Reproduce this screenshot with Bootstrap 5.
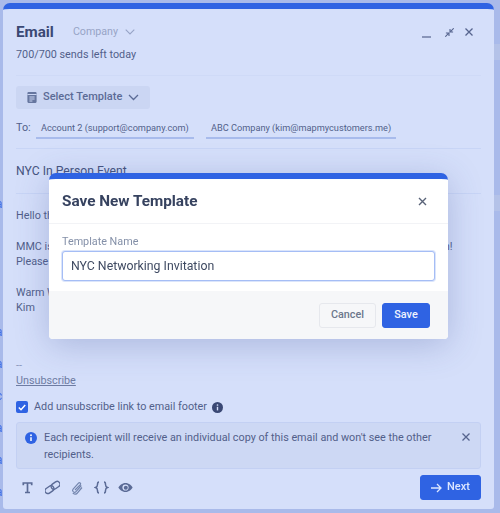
<!DOCTYPE html>
<html lang="en">
<head>
<meta charset="utf-8">
<title>Email</title>
<link href="https://cdn.jsdelivr.net/npm/bootstrap@5.3.0/dist/css/bootstrap.min.css" rel="stylesheet">
<style>
html,body{height:513px;overflow:hidden}
body{background:#a9baea;font-family:Roboto,"Liberation Sans",sans-serif;color:#525f8a;font-size:10.8px;position:relative}
.stage{height:513px;filter:blur(.3px)}
.edge-left{width:3px;overflow:hidden;padding-top:192px;flex:none}
.edge-left span{display:block;height:32px;line-height:24px;color:#3f6fe6;font-size:12px;margin-left:-4px}
.edge-right{flex:1;display:flex;flex-direction:column;padding-top:44px}
.edge-band{height:16px;background:#b4c2e8;margin-bottom:135px}
.compose{width:491px;height:506px;margin-top:3px;background:#d5dffa;border-top:6px solid #2f63e3;border-radius:7px 7px 3px 3px;padding:0 13px;display:flex;flex-direction:column;flex:none}
.compose>*{flex:none}
.compose-head{height:67px;padding-top:12px;border-bottom:1px solid #cfdaf7}
.ttl{font-size:15.2px;font-weight:700;color:#3a4874;line-height:22px}
.company{font-size:10.7px;color:#97a4c6;margin-left:19px}
.chev-co{margin-left:7px}
.sends{font-size:10.8px;margin-top:3px;line-height:18px;color:#525f8a}
.win-btns{margin-right:8px;color:#56648e}
.tpl-row{height:33px}
.tpl-btn{background:#cbd6f3;border:0;border-radius:3px;color:#5b6b96;font-size:11px;font-weight:500;height:23px;width:134px;margin-top:10px;padding:0 11px;gap:6px;white-space:nowrap}
.to-row{height:40px;border-bottom:1px solid #c8d5f6;padding-top:6px;align-items:flex-start}
.to-lbl{font-size:10.8px;width:20px;margin-top:5px;line-height:16px}
.chip{font-size:9.2px;line-height:15px;height:24px;padding:5px 0 0 5px;border-bottom:2px solid #a8bbec;color:#525f8a;margin-right:12px}
.chip-a{width:158px}
.chip-b{width:190px}
.subj{font-size:12.2px;height:45px;line-height:45px;border-bottom:1px solid #c8d5f6;color:#46547f}
.body-txt{height:163px;padding-top:14px;line-height:15.5px;font-size:10.8px}
.body-txt p{margin:0 0 15px}
.dash{height:16px;line-height:17px;color:#8b98bb}
.unsub{color:#6e7ca3;text-decoration:underline;line-height:16px;display:block;font-size:10.8px}
.chk-row{margin-top:8px;height:20px;font-size:10.8px}
.chk-box{width:12px;height:12px;border-radius:2px;background:#2f63e3;flex:none}
.chk-txt{margin-left:6px;margin-right:5px}
.note{margin-top:5px;height:47px;background:#cdd8f4;border:1px solid #c3d0f3;border-radius:3px;padding:6px 9px 6px 8px;margin-bottom:0;gap:7px;line-height:17px;color:#525f8a;font-size:10.8px}
.note-txt{width:395px}
.note-ico{margin-top:3px;flex:none}
.note-x{margin:4px 1px 0 auto;flex:none}
.foot-row{height:40px;padding:6px 0 0 4px}
.tools{gap:9.5px;margin-top:5px}
.next-btn{--bs-btn-bg:#2f63e3;--bs-btn-border-color:#2f63e3;--bs-btn-color:#dce6ff;width:61px;height:25px;font-size:11px;font-weight:500;padding:0;border-radius:3px;gap:5px}
.save-pop{position:absolute;left:49px;top:173px;width:399px;height:166px;background:#fff;border:0;border-top:6px solid #2f63e3;border-radius:7px 7px 4px 4px;box-shadow:0 6px 34px rgba(60,80,150,.28);overflow:hidden;filter:blur(.3px)}
.pop-head{height:45px;flex:none;padding:0 13px;border-bottom:1px solid #f2f3f6;border-radius:0}
.pop-title{font-size:15.3px;font-weight:700;color:#36425f;line-height:20px}
.pop-close{margin-right:8px}
.pop-body{height:67px;padding:9px 13px 0;flex:none}
.pop-lbl{font-size:10.8px;color:#8490a8;margin:0;line-height:18px;display:block}
.pop-input{height:30px;border:1px solid #a5bdf5;border-radius:3px;box-shadow:0 0 0 1px #dbe5fb;font-size:12.3px;color:#3f4a62;padding:0 8px;font-family:Roboto,"Liberation Sans",sans-serif}
.pop-foot{height:48px;background:#f6f7f9;border:0;border-radius:0;padding:0 18px 0 0;margin:0;gap:6px}
.pop-foot>*{margin:0}
.cancel-btn{--bs-btn-color:#6c778c;--bs-btn-border-color:#e6e8ed;--bs-btn-bg:#f6f7f9;width:57px;height:25px;font-size:10.8px;font-weight:500;padding:0;border-radius:3px}
.save-btn{--bs-btn-bg:#2f63e3;--bs-btn-border-color:#2f63e3;--bs-btn-color:#f0f4ff;width:48px;height:25px;font-size:10.8px;font-weight:500;padding:0;border-radius:3px}
.i-min{margin:10px 14px 0 0}
.i-shr{margin:0 11px 0 0}
</style>
</head>
<body>
<div class="stage d-flex">
  <div class="edge-left"><span>a</span><span>)</span><span>)</span><span>l</span><span>a</span><span>a</span><span>c</span><span>a</span><span>a</span><span>a</span></div>
  <div class="compose">
    <div class="compose-head">
      <div class="d-flex justify-content-between">
        <div class="d-flex align-items-center">
          <span class="ttl">Email</span>
          <span class="company">Company</span>
          <svg class="chev-co" width="10" height="6" viewBox="0 0 10 6" fill="none" stroke="#97a4c6" stroke-width="1.1"><path d="M.7.7L5 5 9.300.7"/></svg>
        </div>
        <div class="d-flex align-items-center win-btns">
          <svg class="i-min" width="9" height="2" viewBox="0 0 9 2" fill="none" stroke="#56648e" stroke-width="1.2"><path d="M0 1h9"/></svg>
          <svg class="i-shr" width="9" height="9" viewBox="0 0 9 9" fill="none" stroke="#56648e" stroke-width="1.1"><path d="M.3 8.700L3.300 5.700M.9 5H4V8.100M8.700.3L5.700 3.300M5 .9V4H8.100"/></svg>
          <svg width="8" height="8" viewBox="0 0 8 8" fill="none" stroke="#56648e" stroke-width="1.300"><path d="M.5.5l7 7M7.500.5l-7 7"/></svg>
        </div>
      </div>
      <div class="sends">700/700 sends left today</div>
    </div>
    <div class="d-flex tpl-row"><button class="tpl-btn d-flex align-items-center" type="button">
      <svg width="10" height="11" viewBox="0 0 10 11" class="flex-shrink-0"><path fill="#66769f" d="M1.500 0h7A1.200 1.200 0 0 1 9.600 1.200v8.600A1.200 1.200 0 0 1 8.500 11h-7A1.200 1.200 0 0 1 .4 9.800V1.200A1.200 1.200 0 0 1 1.500 0z"/><path stroke="#cbd6f3" stroke-width="1" d="M.4 2.500h9.200M2.400 5h5.200M2.400 7h5.200M2.400 9h3"/></svg>
      <span>Select Template</span>
      <svg class="flex-shrink-0" width="11" height="7" viewBox="0 0 11 7" fill="none" stroke="#5b6b96" stroke-width="1.300"><path d="M1 1l4.500 4.500L10 1"/></svg>
    </button></div>
    <div class="d-flex to-row">
      <span class="to-lbl">To:</span>
      <span class="chip chip-a text-nowrap">Account 2 (support@company.com)</span>
      <span class="chip chip-b text-nowrap">ABC Company (kim@mapmycustomers.me)</span>
    </div>
    <div class="subj">NYC In Person Event</div>
    <div class="body-txt">
      <p>Hello there,</p>
      <p class="text-nowrap">MMC is hosting our exclusive, in-person networking event in New York City later this month!<br>Please join us for an evening of great conversation.</p>
      <p>Warm Wishes,<br>Kim</p>
    </div>
    <div class="dash">--</div>
    <a class="unsub" href="#">Unsubscribe</a>
    <div class="d-flex align-items-center chk-row">
      <span class="chk-box d-flex align-items-center justify-content-center">
        <svg width="8" height="7" viewBox="0 0 8 7" fill="none" stroke="#fff" stroke-width="1.500"><path d="M.8 3.500l2.200 2.200L7.200.9"/></svg>
      </span>
      <span class="chk-txt">Add unsubscribe link to email footer</span>
      <svg width="11" height="11" viewBox="0 0 11 11"><circle cx="5.500" cy="5.500" r="5.500" fill="#3a4874"/><path stroke="#d5dffa" stroke-width="1.400" d="M5.500 4.800v3.600"/><circle cx="5.500" cy="3" r=".85" fill="#d5dffa"/></svg>
    </div>
    <div class="alert note d-flex" role="alert">
      <svg class="note-ico" width="12" height="12" viewBox="0 0 12 12"><circle cx="6" cy="6" r="6" fill="#2f63e3"/><path stroke="#fff" stroke-width="1.500" d="M6 5.200v3.800"/><circle cx="6" cy="3.200" r=".95" fill="#fff"/></svg>
      <span class="note-txt">Each recipient will receive an individual copy of this email and won't see the other recipients.</span>
      <svg class="note-x" width="8" height="8" viewBox="0 0 8 8" fill="none" stroke="#56648e" stroke-width="1.300"><path d="M.5.5l7 7M7.500.5l-7 7"/></svg>
    </div>
    <div class="d-flex justify-content-between foot-row">
      <div class="d-flex align-items-start tools">
        <svg width="15" height="15" viewBox="0 0 15 15" fill="none" stroke="#5b6b96" stroke-width="1.700"><path d="M3.300 5.300V3h8.400v2.300M7.500 3v9.200M5 12.500h5"/></svg>
        <svg width="15" height="15" viewBox="0 0 15 15" fill="none" stroke="#5b6b96" stroke-width="1.400"><g transform="rotate(-35 7.500 7.500)"><rect x="-1" y="4.700" width="9.500" height="5.600" rx="2.800"/><rect x="6.500" y="4.700" width="9.500" height="5.600" rx="2.800"/></g></svg>
        <svg width="15" height="15" viewBox="0 0 15 15" fill="none" stroke="#7385ae" stroke-width="1.200"><path d="M12.300 5.500L7 11.700a1.900 1.900 0 0 1-2.900-2.500l5.400-6.100a1.200 1.200 0 0 1 1.800 1.600L6 10"/><path d="M13 7.500L8.500 12.800a3 3 0 0 1-4.700 .4"/></svg>
        <svg width="15" height="15" viewBox="0 0 15 15" fill="none" stroke="#5b6b96" stroke-width="1.500"><path d="M5 2C3.500 2 3.500 3 3.500 4.500 3.500 6 3 7 1.500 7.500 3 8 3.500 9 3.500 10.500 3.500 12 3.500 13 5 13M10 2C11.500 2 11.500 3 11.500 4.500 11.500 6 12 7 13.500 7.500 12 8 11.500 9 11.500 10.500 11.500 12 11.500 13 10 13"/></svg>
        <svg width="15" height="15" viewBox="0 0 15 15"><path fill="#5b6b96" d="M7.500 3C4 3 1.400 5.500 .4 7.500c1 2 3.600 4.500 7.100 4.500s6.100-2.500 7.100-4.500C13.600 5.500 11 3 7.500 3z"/><circle cx="7.500" cy="7.500" r="3.100" fill="#d5dffa"/><circle cx="7.800" cy="7.700" r="2" fill="#5b6b96"/></svg>
      </div>
      <button class="btn next-btn d-flex align-items-center justify-content-center" type="button">
        <svg width="11" height="10" viewBox="0 0 11 10" fill="none" stroke="#dce6ff" stroke-width="1.300"><path d="M0 5h10M6 1l4 4-4 4"/></svg>
        <span>Next</span>
      </button>
    </div>
  </div>
  <div class="edge-right"><div class="edge-band"></div><div class="edge-band"></div></div>
</div>
<div class="modal-content save-pop d-flex flex-column">
  <div class="modal-header pop-head d-flex align-items-center justify-content-between">
    <h5 class="modal-title pop-title">Save New Template</h5>
    <svg class="pop-close" width="9" height="9" viewBox="0 0 9 9" fill="none" stroke="#596378" stroke-width="1.400"><path d="M1 1l7 7M8 1l-7 7"/></svg>
  </div>
  <div class="modal-body pop-body">
    <label class="pop-lbl" for="tplName">Template Name</label>
    <input id="tplName" class="form-control pop-input" type="text" value="NYC Networking Invitation">
  </div>
  <div class="modal-footer pop-foot d-flex justify-content-end align-items-center">
    <button class="btn cancel-btn" type="button">Cancel</button>
    <button class="btn save-btn" type="button">Save</button>
  </div>
</div>
<script src="https://cdn.jsdelivr.net/npm/bootstrap@5.3.0/dist/js/bootstrap.bundle.min.js"></script>
</body>
</html>
